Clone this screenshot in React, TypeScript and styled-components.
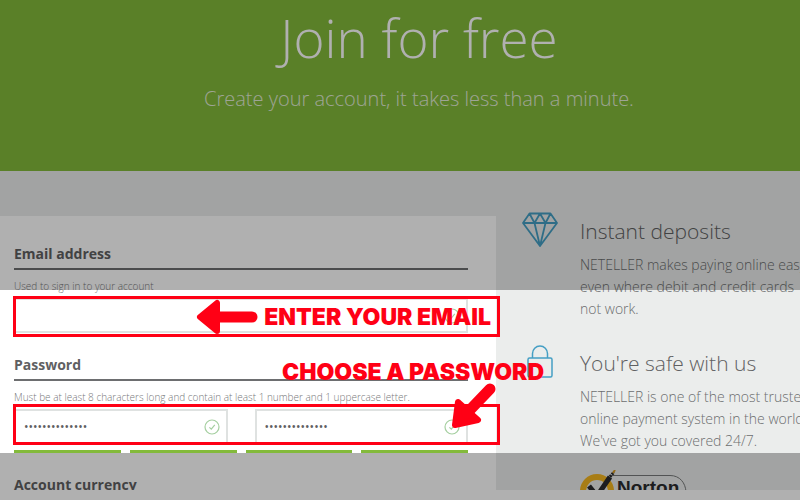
import React from "react";
import styled, { createGlobalStyle } from "styled-components";

const RED = "#ff0015";
const GREEN = "#83ba3b";
const BLUE = "#459fc4";

const GlobalStyle = createGlobalStyle`
  * { box-sizing: border-box; }
  body {
    margin: 0;
    background: #fff;
    color: #5f6062;
    font-family: "Open Sans", "Noto Sans", sans-serif;
  }
  h1, h2, h3, p { margin: 0; }
`;

const Page = styled.div`
  position: relative;
  display: grid;
  grid-template-rows: auto minmax(0, 1fr) 10px;
  height: 100vh;
  overflow: hidden;
`;

const Hero = styled.header`
  background: ${GREEN};
  color: #fff;
  text-align: center;
  padding: 0 16px 59px 54px;
`;

const HeroTitle = styled.h1`
  font-size: 53px;
  line-height: 76px;
  font-weight: 300;
`;

const HeroText = styled.p`
  padding-top: 9px;
  font-size: 20px;
  line-height: 27px;
  font-weight: 300;
  color: #e4eed8;
`;

const Main = styled.main`
  display: grid;
  grid-template-columns: 62% minmax(0, 1fr);
  background: #ebedec;
  overflow: hidden;
`;

const Form = styled.form`
  margin-top: 45px;
  padding: 24px 28px 0 14px;
  background: #fff;
`;

const Section = styled.section`
  position: relative;
  margin-bottom: 18px;
`;

const SectionTitle = styled.h2`
  border-bottom: 2px solid #6d6e70;
  font-size: 14px;
  line-height: 28px;
  font-weight: 700;
`;

const Hint = styled.label`
  display: block;
  padding-top: 6px;
  font-size: 10px;
  line-height: 20px;
  font-weight: 300;
  color: #77787a;
`;

const Fields = styled.div`
  position: relative;
  display: grid;
  grid-auto-flow: column;
  grid-auto-columns: minmax(0, 1fr);
  gap: 27px;
  padding-top: 2px;
`;

const Field = styled.div`
  display: grid;
  align-items: center;
`;

const Input = styled.input`
  grid-area: 1 / 1;
  width: 100%;
  height: 35px;
  padding: 0 36px 0 8px;
  border: 2px solid #dfe2e1;
  background: #fff;
  color: #5f6062;
  font: 12px "Open Sans", sans-serif;
  outline: none;
`;

const Valid = styled.svg`
  grid-area: 1 / 1;
  justify-self: end;
  margin-right: 8px;
  width: 16px;
  height: 16px;
`;

const Strength = styled.div`
  display: grid;
  grid-template-columns: repeat(4, 1fr);
  gap: 9px;
  padding-top: 6px;
`;

const StrengthBar = styled.span`
  height: 3px;
  background: ${GREEN};
`;

const Benefits = styled.aside`
  padding: 41px 0 0 26px;
  overflow: hidden;
`;

const Benefit = styled.article`
  display: grid;
  grid-template-columns: 36px max-content;
  column-gap: 22px;
  margin-bottom: 24px;
`;

const BenefitTitle = styled.h3`
  padding-bottom: 4px;
  font-size: 21px;
  line-height: 38px;
  font-weight: 300;
`;

const BenefitText = styled.p`
  font-size: 14px;
  line-height: 22px;
  font-weight: 300;
  color: #6c6d6f;
`;

const Icon = styled.svg`
  width: 36px;
  height: 36px;
`;

const Seal = styled.div`
  display: flex;
  position: relative;
  width: 108px;
  height: 48px;
  margin: -6px 0 0 58px;
`;

const SealArt = styled.svg`
  position: absolute;
  inset: 0;
`;

const SealName = styled.span`
  position: relative;
  padding-left: 37px;
  padding-top: 7px;
  font: 700 19px/22px "Liberation Sans", sans-serif;
  color: #2b2b2d;
`;

const Spotlight = styled.div`
  position: absolute;
  inset: 0;
  z-index: 1;
  display: grid;
  grid-template-rows: 290px 163px 1fr;
  pointer-events: none;
`;

const Shade = styled.div`
  background: rgba(0, 0, 0, 0.31);
`;

const Callout = styled.div<{ $top: number }>`
  position: absolute;
  z-index: 2;
  top: ${({ $top }) => $top}px;
  left: -1px;
  right: -32px;
  height: 41px;
  display: flex;
  align-items: center;
  justify-content: flex-end;
  gap: 6px;
  padding-right: 6px;
  border: 3px solid ${RED};
  pointer-events: none;
`;

const CalloutText = styled.strong`
  font-family: Inter, sans-serif;
  font-size: 23px;
  line-height: 28px;
  font-weight: 900;
  white-space: nowrap;
  color: ${RED};
`;

const PasswordCallout = styled.div`
  position: absolute;
  z-index: 3;
  top: 7px;
  right: -76px;
  display: flex;
  flex-direction: column;
  pointer-events: none;
`;

const DownArrow = styled.svg`
  align-self: flex-end;
  margin: -4px 48px 0 0;
`;

const Check = () => (
  <Valid viewBox="0 0 16 16" fill="none" stroke="#a5cfa0" aria-hidden="true">
    <circle cx="8" cy="8" r="7" strokeWidth="1.2" />
    <path d="M5.4 8.3l1.9 1.9 3.5-4.4" strokeWidth="1.2" />
  </Valid>
);

export default function App() {
  return (
    <>
      <GlobalStyle />
      <Page>
        <Hero>
          <HeroTitle>Join for free</HeroTitle>
          <HeroText>Create your account, it takes less than a minute.</HeroText>
        </Hero>
        <Main>
          <Form>
            <Section>
              <SectionTitle>Email address</SectionTitle>
              <Hint htmlFor="email">Used to sign in to your account</Hint>
              <Fields>
                <Field>
                  <Input id="email" type="email" />
                  <Check />
                </Field>
                <Callout $top={0}>
                  <svg width="62" height="36" viewBox="0 0 62 36" fill={RED} stroke={RED} strokeLinejoin="round" strokeLinecap="round" aria-hidden="true">
                    <path d="M4 18L21 4V32Z" strokeWidth="6" />
                    <path d="M20 18H56" strokeWidth="11" />
                  </svg>
                  <CalloutText>ENTER YOUR EMAIL</CalloutText>
                </Callout>
              </Fields>
            </Section>
            <Section>
              <SectionTitle>Password</SectionTitle>
              <Hint htmlFor="password">
                Must be at least 8 characters long and contain at least 1 number and 1 uppercase letter.
              </Hint>
              <Fields>
                <Field>
                  <Input id="password" type="password" defaultValue="Abcdefghijklm1" />
                  <Check />
                </Field>
                <Field>
                  <Input type="password" aria-label="Confirm password" defaultValue="Abcdefghijklm1" />
                  <Check />
                </Field>
                <Callout $top={-3} />
              </Fields>
              <Strength>
                <StrengthBar />
                <StrengthBar />
                <StrengthBar />
                <StrengthBar />
              </Strength>
              <PasswordCallout>
                <CalloutText>CHOOSE A PASSWORD</CalloutText>
                <DownArrow width="46" height="52" viewBox="0 0 46 52" fill={RED} stroke={RED} strokeLinejoin="round" strokeLinecap="round" aria-hidden="true">
                  <path d="M5 43L8 20L28 38Z" strokeWidth="6" />
                  <path d="M40 7L17 31" strokeWidth="11" />
                </DownArrow>
              </PasswordCallout>
            </Section>
            <Section>
              <SectionTitle>Account currency</SectionTitle>
            </Section>
          </Form>
          <Benefits>
            <Benefit>
              <Icon viewBox="0 0 36 36" fill="none" stroke={BLUE} strokeWidth="1.8" strokeLinejoin="round" aria-hidden="true">
                <path d="M7.5 1.500H28.500L35 11L18 34L1 11ZM1 11H35M7.500 1.500L12.500 11L18 1.500L23.500 11L28.500 1.500M12.500 11L18 34L23.500 11" />
              </Icon>
              <div>
                <BenefitTitle>Instant deposits</BenefitTitle>
                <BenefitText>
                  NETELLER makes paying online easy,
                  <br />
                  even where debit and credit cards
                  <br />
                  not work.
                </BenefitText>
              </div>
            </Benefit>
            <Benefit>
              <Icon viewBox="0 0 36 36" fill="none" stroke={BLUE} strokeWidth="1.5" aria-hidden="true">
                <rect x="6" y="14" width="24" height="19" rx="1.500" />
                <path d="M10.500 14V9.500A7.500 7.500 0 0 1 25.500 9.500V14" />
              </Icon>
              <div>
                <BenefitTitle>You're safe with us</BenefitTitle>
                <BenefitText>
                  NETELLER is one of the most trusted
                  <br />
                  online payment system in the world.
                  <br />
                  We've got you covered 24/7.
                </BenefitText>
              </div>
            </Benefit>
            <Seal>
              <SealArt width="108" height="48" viewBox="0 0 108 48" fill="none" aria-hidden="true">
                <path d="M30 5.500H90C100 5.500 105.500 13 106 22V42H30" stroke="#77797a" />
                <circle cx="17" cy="21" r="14" stroke="#f4b51f" strokeWidth="6" />
                <path d="M9 16L17 26L30 7" stroke="#2b2b2d" strokeWidth="5" />
                <path d="M28 9L34 2" stroke="#2b2b2d" strokeWidth="3" strokeDasharray="2 1" />
                <path d="M33 3L35 0" stroke="#d79a20" strokeWidth="2" />
              </SealArt>
              <SealName>Norton</SealName>
            </Seal>
          </Benefits>
        </Main>
        <div />
        <Spotlight>
          <Shade />
          <div />
          <Shade />
        </Spotlight>
      </Page>
    </>
  );
}
